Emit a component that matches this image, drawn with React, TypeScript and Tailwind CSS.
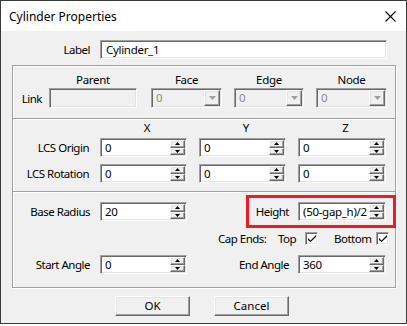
import type { ReactNode } from "react";

// classic win32 edges
const SUNKEN =
  "border border-t-[#a0a0a0] border-l-[#a0a0a0] border-b-white border-r-white shadow-[inset_1px_1px_0_#696969,inset_-1px_-1px_0_#e3e3e3]";
const RAISED =
  "border border-t-white border-l-white border-b-[#696969] border-r-[#696969] shadow-[inset_-1px_-1px_0_#a0a0a0,inset_1px_1px_0_#e3e3e3]";
const DIVIDER = "border-t border-[#a0a0a0] shadow-[inset_0_1px_0_#fff]";

function Arrow({ up }: { up?: boolean }) {
  return (
    <svg width="5" height="3" viewBox="0 0 5 3" className="block">
      <path d={up ? "M2.5 0L5 3H0z" : "M0 0h5L2.5 3z"} fill="#000" />
    </svg>
  );
}

function SpinBtn({ up }: { up?: boolean }) {
  return (
    <div className={`flex flex-1 items-center justify-center bg-[#f0f0f0] ${RAISED}`}>
      <Arrow up={up} />
    </div>
  );
}

function SpinBox({ value, className }: { value: string; className: string }) {
  return (
    <div className={`flex h-[19px] bg-white p-px ${SUNKEN} ${className}`}>
      <span className="flex-1 overflow-hidden whitespace-nowrap pl-[3px] text-[11.5px] leading-[15px] tracking-[-0.3px] text-black">
        {value}
      </span>
      <div className="flex w-[15px] flex-col">
        <SpinBtn up />
        <SpinBtn />
      </div>
    </div>
  );
}

function Combo({ className }: { className: string }) {
  return (
    <div className={`flex h-[20px] bg-[#f0f0f0] p-px ${SUNKEN} ${className}`}>
      <span className="flex-1 pl-[3px] text-[11.5px] leading-[16px] text-[#8a8a8a]">0</span>
      <div className={`flex w-[16px] items-center justify-center bg-[#f0f0f0] ${RAISED}`}>
        <svg width="7" height="4" viewBox="0 0 7 4">
          <path d="M0 0h7L3.5 4z" fill="#a0a0a0" />
        </svg>
      </div>
    </div>
  );
}

function Check() {
  return (
    <div className={`flex h-[13px] w-[13px] items-center justify-center bg-white ${SUNKEN}`}>
      <svg width="8" height="7" viewBox="0 0 8 7">
        <path d="M0 3l2.5 2.5L8 0v2L2.5 7 0 5z" fill="#000" />
      </svg>
    </div>
  );
}

function Btn({ children }: { children: ReactNode }) {
  return (
    <button className={`h-[20px] w-[75px] bg-[#f0f0f0] text-[11.5px] leading-[16px] text-black ${RAISED}`}>
      {children}
    </button>
  );
}

function Label({ children, className }: { children: ReactNode; className: string }) {
  return (
    <span className={`whitespace-nowrap text-right text-[11.5px] leading-[15px] tracking-[-0.5px] text-black ${className}`}>
      {children}
    </span>
  );
}

export default function App() {
  return (
    <div className="h-[326px] w-[407px] bg-white font-['Noto_Sans',sans-serif] text-[11.5px]">
      <div className="relative flex h-[324px] w-[407px] flex-col border border-[#3a3a3a] bg-[#f0f0f0]">
        {/* title bar */}
        <div className="flex h-[30px] items-center justify-between bg-white pl-[8px] pr-[10px]">
          <span className="pt-[1px] text-[12px] text-black">Cylinder Properties</span>
          <svg width="11" height="11" viewBox="0 0 11 11" className="mt-[1px]">
            <path d="M0.5 0.5l10 10M10.5 0.5l-10 10" stroke="#000" strokeWidth="1.1" />
          </svg>
        </div>

        {/* label */}
        <div className="mt-[9px] flex items-center">
          <Label className="w-[89px]">Label</Label>
          <div className={`ml-[10px] flex h-[19px] w-[287px] items-center bg-white pl-[5px] ${SUNKEN}`}>
            <span className="text-[11.5px] leading-[15px] tracking-[-0.3px] text-black">Cylinder_1</span>
          </div>
        </div>

        {/* groups */}
        <div className="ml-[11px] mt-[6px] w-[384px] border border-[#a0a0a0] shadow-[inset_1px_1px_0_#fff,1px_1px_0_#fff]">
          {/* link */}
          <div className="h-[52px] pt-[6px]">
            <div className="flex h-[15px] text-center text-[11.5px] leading-[15px] tracking-[-0.3px] text-black">
              <span className="ml-[36px] w-[88px]">Parent</span>
              <span className="ml-[14px] w-[71px]">Face</span>
              <span className="ml-[12px] w-[70px]">Edge</span>
              <span className="ml-[12px] w-[71px]">Node</span>
            </div>
            <div className="mt-[1px] flex items-center">
              <Label className="w-[29px]">Link</Label>
              <div className={`ml-[7px] h-[20px] w-[88px] bg-[#f0f0f0] ${SUNKEN}`} />
              <Combo className="ml-[14px] w-[71px]" />
              <Combo className="ml-[12px] w-[70px]" />
              <Combo className="ml-[12px] w-[71px]" />
            </div>
          </div>

          {/* lcs */}
          <div className={`h-[73px] ${DIVIDER}`}>
            <div className="mt-[1px] flex h-[15px] text-center text-[11.5px] leading-[15px] text-black">
              <span className="ml-[87px] w-[87px] pl-[7px]">X</span>
              <span className="ml-[12px] w-[87px] pl-[7px]">Y</span>
              <span className="ml-[12px] w-[88px] pl-[7px]">Z</span>
            </div>
            <div className="mt-[3px] flex items-center">
              <Label className="w-[76px]">LCS Origin</Label>
              <SpinBox value="0" className="ml-[11px] w-[87px]" />
              <SpinBox value="0" className="ml-[12px] w-[87px]" />
              <SpinBox value="0" className="ml-[12px] w-[88px]" />
            </div>
            <div className="mt-[7px] flex items-center">
              <Label className="w-[76px]">LCS Rotation</Label>
              <SpinBox value="0" className="ml-[11px] w-[87px]" />
              <SpinBox value="0" className="ml-[12px] w-[87px]" />
              <SpinBox value="0" className="ml-[12px] w-[88px]" />
            </div>
          </div>

          {/* cylinder */}
          <div className={`h-[96px] ${DIVIDER}`}>
            <div className="mt-[10px] flex items-center">
              <Label className="w-[77px]">Base Radius</Label>
              <SpinBox value="20" className="ml-[10px] w-[87px]" />
              <Label className="w-[102px]">Height</Label>
              <SpinBox value="(50-gap_h)/2" className="ml-[9px] w-[88px]" />
            </div>
            <div className="mt-[11px] flex h-[13px] items-center text-[11.5px] leading-[15px] tracking-[-0.5px] text-black">
              <span className="ml-[205px] w-[60px]">Cap Ends:</span>
              <span className="w-[27px]">Top</span>
              <Check />
              <span className="ml-[16px] w-[42px]">Bottom</span>
              <Check />
            </div>
            <div className="mt-[10px] flex items-center">
              <Label className="w-[77px]">Start Angle</Label>
              <SpinBox value="0" className="ml-[10px] w-[87px]" />
              <Label className="w-[102px]">End Angle</Label>
              <SpinBox value="360" className="ml-[9px] w-[88px]" />
            </div>
          </div>
        </div>

        {/* buttons */}
        <div className="mt-[8px] flex">
          <div className="ml-[114px]">
            <Btn>OK</Btn>
          </div>
          <div className="ml-[24px]">
            <Btn>Cancel</Btn>
          </div>
        </div>

        {/* annotation */}
        <div className="absolute left-[245px] top-[194px] h-[33px] w-[150px] border-[3px] border-[#ed1c24]" />
      </div>
    </div>
  );
}
